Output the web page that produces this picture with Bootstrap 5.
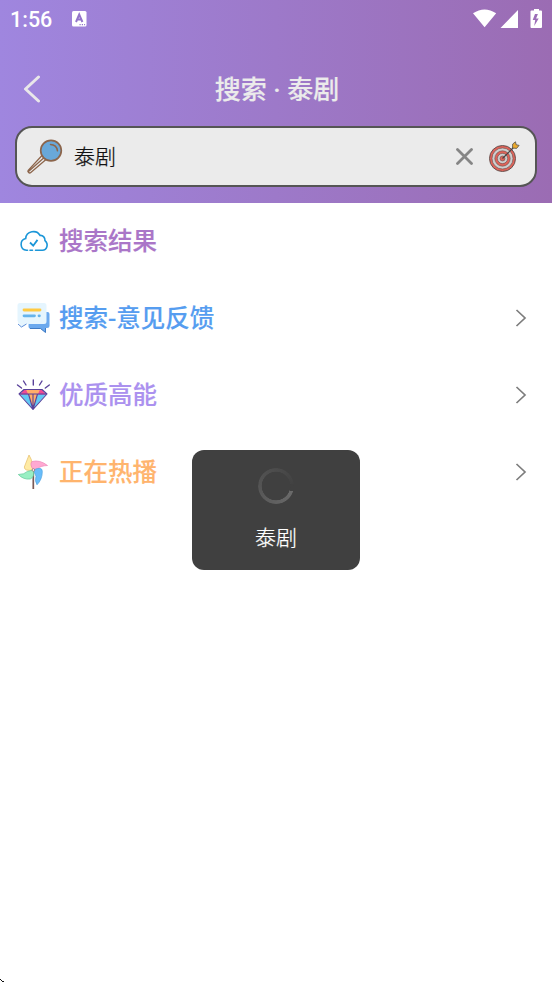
<!DOCTYPE html>
<html lang="zh-CN">
<head>
<meta charset="utf-8">
<meta name="viewport" content="width=device-width, initial-scale=1">
<title>搜索 · 泰剧</title>
<link href="https://cdn.jsdelivr.net/npm/bootstrap@5.3.0/dist/css/bootstrap.min.css" rel="stylesheet">
<style>
body{font-family:Roboto,"Noto Sans CJK SC",sans-serif;height:983px;overflow:hidden;background:#fff}
svg{display:block;flex:none}
.top-area{height:203px;background:linear-gradient(90deg,#9f86df,#9b6cb3)}
.status-bar{height:38px;padding:0 9px 0 10px;color:#fff}
.clock{font-size:21.5px;font-weight:500;line-height:38px;padding-top:2px;width:62px}
.title-bar{height:88px;padding:13px 23px 0}
.page-title{font-size:26px;font-weight:500;line-height:38px;padding-top:3px;color:#ebebeb;width:126px;white-space:nowrap;-webkit-text-stroke:.15px currentColor}
.search-box{height:61px;margin:0 15px;border:2px solid #555;border-radius:17px;background:#ebebeb;padding:0 14px 0 9px}
.query{font-size:21px;font-weight:300;line-height:30px;color:#111;margin-left:11px;padding-top:1px;-webkit-text-stroke:.25px currentColor}
.menu-row{height:77px;padding:0 25px 2px 16px;border:0;background:none}
.menu-label{font-size:24.5px;font-weight:500;line-height:36px;margin-left:8px;padding-top:3px;-webkit-text-stroke:.15px currentColor}
.c-result{color:#aa76c8}.c-feedback{color:#569df0}.c-quality{color:#ab91ef}.c-hot{color:#ffb46d}
.loading-toast{left:192px;top:450px;width:168px;height:120px;border-radius:12px;background:#404040;padding-top:18px}
.loading-text{font-size:21px;font-weight:300;line-height:30px;margin-top:19px;color:#fff;-webkit-text-stroke:.25px currentColor}
.spin-ring{width:36px;height:36px;border-radius:50%;background:conic-gradient(from 108deg,#6a6a6a,#616161 72deg,#555 155deg,#4a4a4a 270deg,#424242 335deg,#404040 336deg);-webkit-mask:radial-gradient(circle,transparent 14px,#000 14.6px);mask:radial-gradient(circle,transparent 14px,#000 14.6px)}
.corner-mark{left:0;bottom:0}
</style>
</head>
<body>
<header class="top-area">
  <div class="status-bar d-flex align-items-center">
    <span class="clock">1:56</span>
    <svg width="15" height="17" viewBox="0 0 15 17"><rect width="14.5" height="15.5" rx="1.5" fill="#fff"/><path d="M4 11 7.200 3.500 10.400 11M5.100 8.500h4.200" fill="none" stroke="#9375ca" stroke-width="2"/><path d="M7.500 13.700h1.200M9.800 13.700H11M12.100 13.700h1" stroke="#9375ca" stroke-width="1.200"/></svg>
    <svg class="ms-auto" width="70" height="22" viewBox="473 7 70 22" fill="#fff"><path d="M473 12.300Q484.500 4.500 496.200 12.300L484.600 26.300ZM518 9v18h-17.500ZM531.500 9.500h2.500V8h5v1.500h2q1 0 1 1V26q0 1-1 1h-9.500q-1 0-1-1V10.500q0-1 1-1Z"/><path d="m535 13-2.300 6h2.500l-1 6 4.500-7.500h-2.600l1.800-4.500Z" fill="#9c6eb8"/></svg>
  </div>
  <div class="title-bar d-flex align-items-center justify-content-between">
    <svg width="18" height="28" viewBox="0 0 18 28"><path d="M15.500 2 2.500 14l13 12" fill="none" stroke="#e9e7e9" stroke-width="3" stroke-linecap="round" stroke-linejoin="round"/></svg>
    <h1 class="page-title text-center mb-0">搜索 · 泰剧</h1>
    <span class="px-2"></span>
  </div>
  <div class="search-box d-flex align-items-center">
    <svg width="37" height="36" viewBox="26 139 37 36"><path d="m44.500 157.300-16 14.200M42 155.500l-13.800 14.800q-.8 1.200.2 2 1.200 1.200 2.400.2L46 159.500" fill="#eee" stroke="#8c654b" stroke-width="1.300"/><circle cx="51" cy="150.600" r="10.300" fill="#69a8d9" stroke="#8c654b" stroke-width="1.700"/><path d="M50.500 144.600q6 .1 7 6.200" fill="none" stroke="#8c654b" stroke-width="1.500" stroke-linecap="round"/></svg>
    <span class="query me-auto">泰剧</span>
    <svg class="me-3" width="17" height="17" viewBox="0 0 17 17"><path d="m1.500 1.500 14 14m0-14-14 14" stroke="#858585" stroke-width="2.800" stroke-linecap="round"/></svg>
    <svg width="32" height="32" viewBox="489 141 32 32"><circle cx="502.500" cy="158.500" r="13" fill="#df6258" stroke="#655452"/><circle cx="502.500" cy="158.500" r="10.500" fill="#d0cfcf" stroke="#655452" stroke-width=".6"/><circle cx="502.500" cy="158.500" r="7.700" fill="#df6258" stroke="#655452" stroke-width=".6"/><circle cx="502.500" cy="158.500" r="5.100" fill="#d0cfcf" stroke="#655452" stroke-width=".6"/><circle cx="502.500" cy="158.500" r="2.500" fill="#df6258" stroke="#655452" stroke-width=".6"/><path d="m502.500 158.500 11-11" stroke="#444" stroke-width="1.200"/><path d="m512.500 148 .2-4 2.800-2.200.6 2.900 3 .7-2.500 3Z" fill="#ecaa2d" stroke="#54504a" stroke-width=".8"/></svg>
  </div>
</header>
<main class="list-group list-group-flush">
  <div class="menu-row d-flex align-items-center">
    <svg width="35" height="34" viewBox="16 223.500 35 34"><path d="M27.500 249.800H26.500a6 6 0 0 1-.8-11.800c.5-7.500 11-9.300 14.300-3.100 3.200-.3 5.200 2.400 5 5.300 3.900 3.400 2 9.600-2.600 9.600H35.500M30 249.800h2.500" fill="none" stroke="#1b96d8" stroke-width="1.600" stroke-linecap="round"/><path d="m30 242 3.200 3.200 4.300-5.800" fill="none" stroke="#1b96d8" stroke-width="1.800"/></svg>
    <span class="menu-label c-result">搜索结果</span>
  </div>
  <div class="menu-row d-flex align-items-center">
    <svg width="35" height="34" viewBox="16 301 35 34"><path d="M29 312h18.500q2 0 2 2v11.500q0 2.500-2.500 2.500h-1.500v4.500l-5-3.700H31q-2.500 0-2.500-2.500Z" fill="#6ba9ee"/><path d="M30 328.500h10.500l5 4v-4.500" fill="none" stroke="#3f7bc4"/><path d="M20 303h24q2.500 0 2.500 2.500v16q0 2.500-2.500 2.500H26l-5.500 4-.3-4q-2.700-1-2.700-3.500v-15q0-2.500 2.500-2.500Z" fill="#e5f5fe"/><path d="m18 324 3.500 3 5-3" fill="none" stroke="#5e8fda"/><path d="M24 310h16" stroke="#ffca42" stroke-width="2.800" stroke-linecap="round"/><path d="M24 315.800h10.500M39 315.800h.4" stroke="#65b4ec" stroke-width="2.800" stroke-linecap="round"/></svg>
    <span class="menu-label c-feedback me-auto">搜索-意见反馈</span>
    <svg width="12" height="18" viewBox="0 0 12 18"><path d="m1.500 1 8.500 8-8.500 8" fill="none" stroke="#7d7d7d" stroke-width="1.700"/></svg>
  </div>
  <div class="menu-row d-flex align-items-center">
    <svg width="35" height="34" viewBox="16 377.500 35 34"><path d="m24 389-4 5 13 15 13-15-4-5Z" fill="#62c9f4"/><path d="m24 389-4 5h8.500l4.500-5 4.500 5H46l-4-5Z" fill="#ef4b94"/><path d="M26 389h14l-2 4.500L33 409l-5-15.500Z" fill="#ffae6a"/><path d="M24 389h18l5 4.500L33 409l-14-15.500ZM20 393.500h26M28.500 393.500 33 409l4.500-15.500M33 393.500V409" fill="none" stroke="#59419a" stroke-width="1.100" stroke-linejoin="round"/><path d="m17.500 384.500 4 3M23.500 380.500l2.500 4M33.300 379.500v5M42 380.500l-2.500 4M49.300 384.500l-4 3" stroke="#59419a" stroke-width="1.400" stroke-linecap="round"/></svg>
    <span class="menu-label c-quality me-auto">优质高能</span>
    <svg width="12" height="18" viewBox="0 0 12 18"><path d="m1.500 1 8.500 8-8.500 8" fill="none" stroke="#7d7d7d" stroke-width="1.700"/></svg>
  </div>
  <div class="menu-row d-flex align-items-center">
    <svg width="35" height="36" viewBox="16 453 35 36"><path d="M33.300 470v18" stroke="#7b5a56" stroke-width="1.700"/><g stroke-width=".7"><path d="M33.300 469q-9 1.500-9-3L29 454q3.500 5 2.500 9Z" fill="#ffeba5" stroke="#e5bd68"/><path d="M33.300 469q-4-6-1.300-8.500 8-2 15.500 4-7 .3-9.500 3Z" fill="#ffa9d2" stroke="#ee86b7"/><path d="M33.300 469q9-4 9 1.500 0 8-5.300 13.300-2.500-4-1-8.500Z" fill="#68bdfa" stroke="#51a4e0"/><path d="M33.300 469q1.500 7-3 9-7 .8-12-4.500 6 0 9-3Z" fill="#99efc3" stroke="#62c99a"/></g><circle cx="33.400" cy="469" r="1.300" fill="#fff" stroke="#9a7474" stroke-width=".8"/></svg>
    <span class="menu-label c-hot me-auto">正在热播</span>
    <svg width="12" height="18" viewBox="0 0 12 18"><path d="m1.500 1 8.500 8-8.500 8" fill="none" stroke="#7d7d7d" stroke-width="1.700"/></svg>
  </div>
</main>
<div class="loading-toast position-absolute d-flex flex-column align-items-center" role="status">
  <div class="spin-ring"></div>
  <div class="loading-text">泰剧</div>
</div>
<svg class="corner-mark position-absolute" width="5" height="5" viewBox="0 0 5 5"><path d="M0 1h1v1H0zM1 2h1v1H1zM2 3h2v1H2z" fill="#111"/></svg>
<script src="https://cdn.jsdelivr.net/npm/bootstrap@5.3.0/dist/js/bootstrap.bundle.min.js"></script>
</body>
</html>
